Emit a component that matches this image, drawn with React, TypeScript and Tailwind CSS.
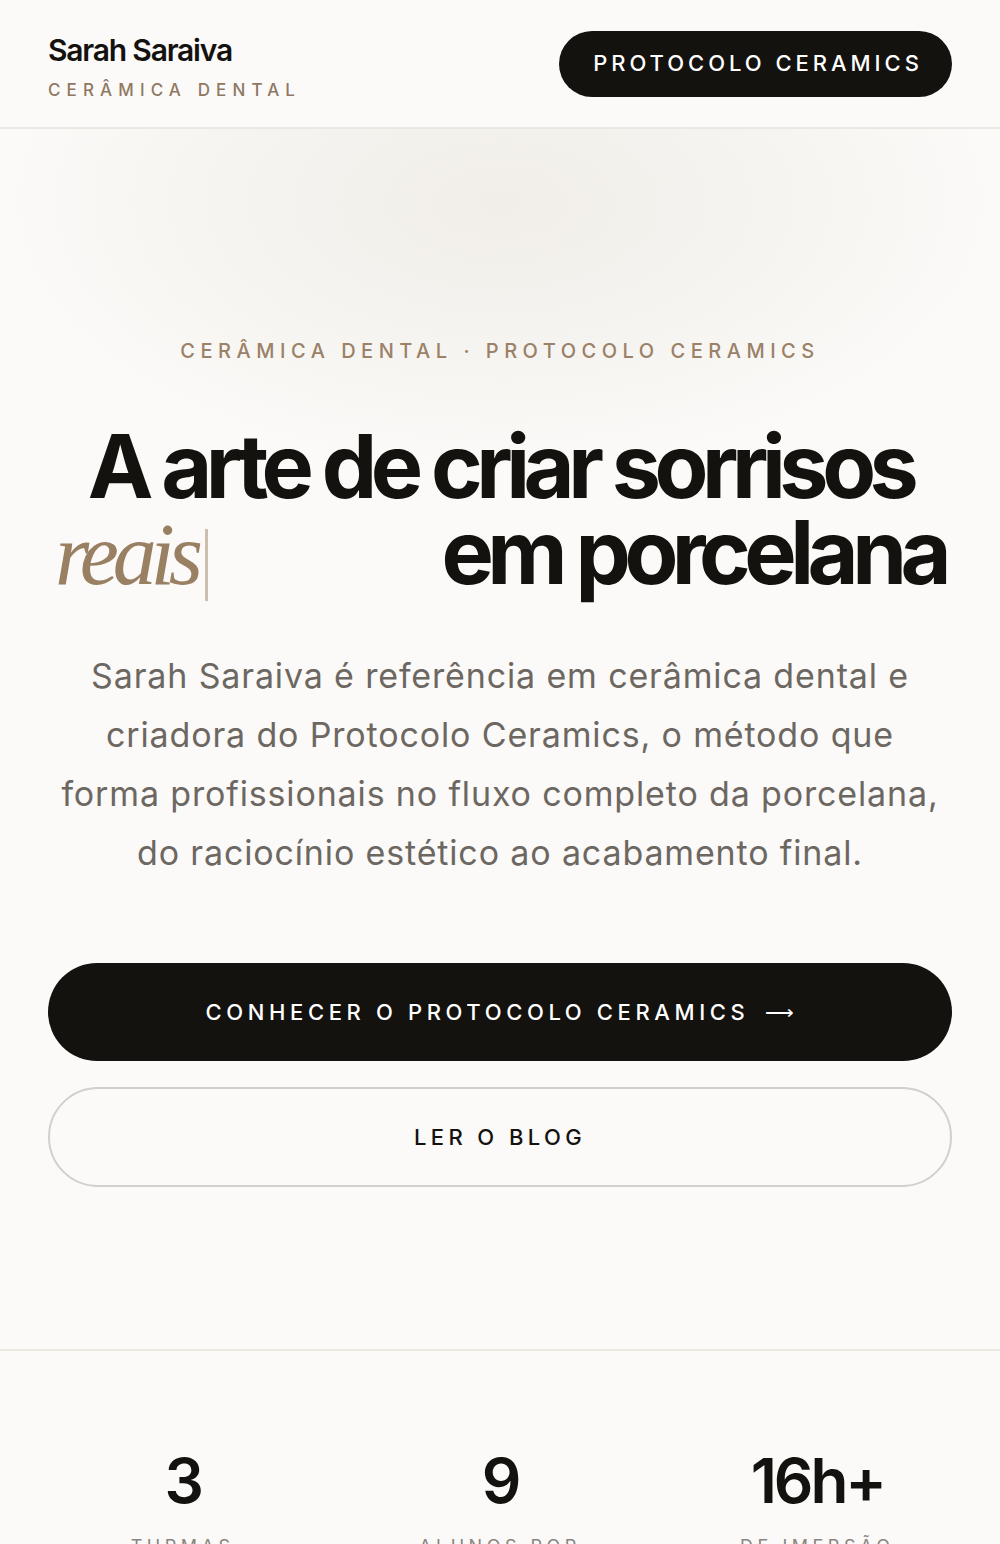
export default function App() {
  const sans = "font-['Inter','Noto_Sans',sans-serif]";
  const stats = [
    { n: "3", l: ["TURMAS", "POR ANO"] },
    { n: "9", l: ["ALUNOS POR", "TURMA"] },
    { n: "16h+", l: ["DE IMERSÃO", "PRÁTICA"] },
  ];
  return (
    <div className={`min-h-screen bg-[#fbfaf8] text-[#14120f] ${sans}`}>
      <header className="flex h-[129px] items-center justify-between border-b-2 border-[#ebe8e2] px-12">
        <div className="pt-[4px]">
          <div className="text-[30px] font-semibold leading-[36px] tracking-[-0.04em] text-[#14120f]">
            Sarah Saraiva
          </div>
          <div className="mt-[12px] text-[17px] font-medium leading-[20px] tracking-[0.36em] text-[#8f7862]">
            CERÂMICA DENTAL
          </div>
        </div>
        <button
          type="button"
          className="flex h-[66px] w-[393px] items-center justify-center rounded-full bg-[#14120f] pl-[5px] text-[22px] font-medium tracking-[0.18em] text-white"
        >
          PROTOCOLO CERAMICS
        </button>
      </header>

      <section className="border-b-2 border-[#ebe8e2] bg-[radial-gradient(ellipse_50%_22%_at_50%_6%,#f1eee9_0%,#f6f4f0_55%,#fbfaf8_100%)] px-12 pb-[162px] pt-[208px]">
        <p className="text-center text-[20px] font-medium leading-[28px] tracking-[0.275em] text-[#9a8168]">
          CERÂMICA DENTAL · PROTOCOLO CERAMICS
        </p>

        <h1 className="mt-[58px] text-[88px] font-bold leading-[86px] tracking-[-0.074em] text-[#14120f]">
          <span className="block text-center">A arte de criar sorrisos</span>
          <span className="mx-auto flex h-[86px] w-[890px] items-baseline justify-between">
            <span className="flex items-baseline">
              <span className="font-['Liberation_Serif','DejaVu_Serif',serif] text-[88px] font-normal italic tracking-[-0.07em] text-[#9a8063]">
                reais
              </span>
              <span className="ml-[8px] inline-block h-[72px] w-[3px] translate-y-[17px] bg-[#cdbfae]" />
            </span>
            <span>em porcelana</span>
          </span>
        </h1>

        <p className="mx-auto mt-[51px] max-w-[886px] text-center text-[34px] leading-[59px] tracking-[0.025em] text-[#6d6762]">
          Sarah Saraiva é referência em cerâmica dental e criadora do Protocolo Ceramics, o método que
          forma profissionais no fluxo completo da porcelana, do raciocínio estético ao acabamento final.
        </p>

        <div className="mt-[81px] flex flex-col gap-[26px]">
          <button
            type="button"
            className="flex h-[98px] w-full items-center justify-center gap-[16px] rounded-full bg-[#14120f] text-[22px] font-medium tracking-[0.21em] text-white"
          >
            <span>CONHECER O PROTOCOLO CERAMICS</span>
            <span className="font-['DejaVu_Sans',sans-serif] text-[20px] font-light tracking-normal">⟶</span>
          </button>
          <button
            type="button"
            className="flex h-[100px] w-full items-center justify-center rounded-full border-2 border-[#d3d0cb] text-[22px] font-medium tracking-[0.2em] text-[#14120f]"
          >
            LER O BLOG
          </button>
        </div>
      </section>

      <section className="grid grid-cols-3 gap-12 px-12 pb-20 pt-[94px]">
        {stats.map((s) => (
          <div key={s.n} className="flex flex-col items-center text-center">
            <div className="text-[62px] font-semibold leading-[72px] tracking-[-0.05em] text-[#14120f]">
              {s.n}
            </div>
            <div className="mt-[16px] text-[18px] leading-[28px] tracking-[0.25em] text-[#8a847e]">
              {s.l.map((t) => (
                <div key={t}>{t}</div>
              ))}
            </div>
          </div>
        ))}
      </section>
    </div>
  );
}
